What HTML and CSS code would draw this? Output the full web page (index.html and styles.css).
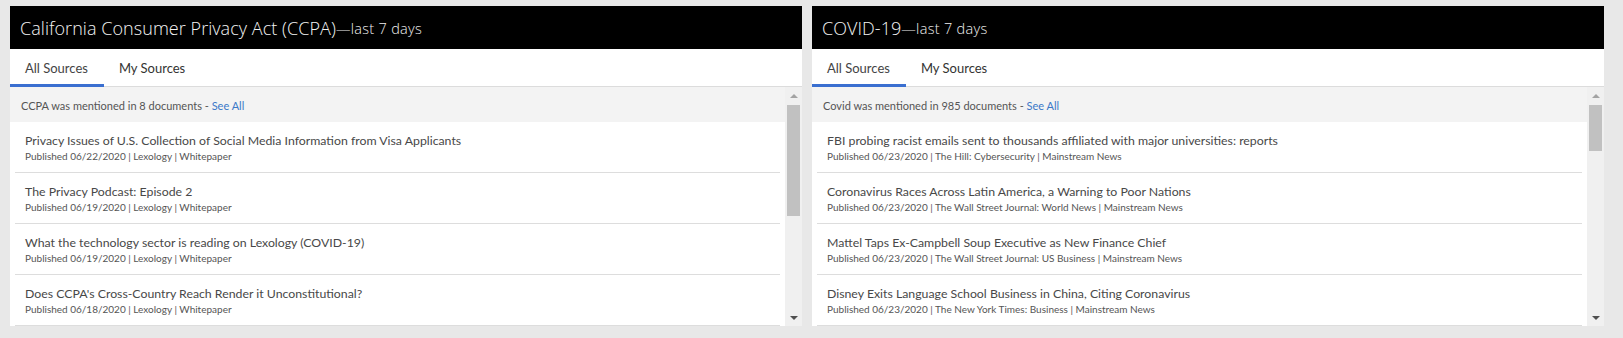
FILE: index.html
```html
<!DOCTYPE html>
<html>
<head>
<meta charset="utf-8">
<link rel="stylesheet" href="styles.css">
</head>
<body>
<div class="board">
  <section class="panel">
    <div class="panel-head"><span class="topic">California Consumer Privacy Act (CCPA)</span><span class="range">—last 7 days</span></div>
    <div class="tabs">
      <div class="tab active">All Sources</div>
      <div class="tab">My Sources</div>
    </div>
    <div class="body">
      <div class="list">
        <div class="info">CCPA was mentioned in 8 documents - <a class="see">See All</a></div>
        <div class="item"><div class="title">Privacy Issues of U.S. Collection of Social Media Information from Visa Applicants</div><div class="meta">Published 06/22/2020 | Lexology | Whitepaper</div></div>
        <div class="item"><div class="title">The Privacy Podcast: Episode 2</div><div class="meta">Published 06/19/2020 | Lexology | Whitepaper</div></div>
        <div class="item"><div class="title">What the technology sector is reading on Lexology (COVID-19)</div><div class="meta">Published 06/19/2020 | Lexology | Whitepaper</div></div>
        <div class="item"><div class="title">Does CCPA's Cross-Country Reach Render it Unconstitutional?</div><div class="meta">Published 06/18/2020 | Lexology | Whitepaper</div></div>
      </div>
      <div class="scrollbar">
        <div class="arrow up"></div>
        <div class="track"><div class="thumb thumb-long"></div></div>
        <div class="arrow down"></div>
      </div>
    </div>
  </section>
  <section class="panel">
    <div class="panel-head"><span class="topic">COVID-19</span><span class="range">—last 7 days</span></div>
    <div class="tabs">
      <div class="tab active">All Sources</div>
      <div class="tab">My Sources</div>
    </div>
    <div class="body">
      <div class="list">
        <div class="info">Covid was mentioned in 985 documents - <a class="see">See All</a></div>
        <div class="item"><div class="title">FBI probing racist emails sent to thousands affiliated with major universities: reports</div><div class="meta">Published 06/23/2020 | The Hill: Cybersecurity | Mainstream News</div></div>
        <div class="item"><div class="title">Coronavirus Races Across Latin America, a Warning to Poor Nations</div><div class="meta">Published 06/23/2020 | The Wall Street Journal: World News | Mainstream News</div></div>
        <div class="item"><div class="title">Mattel Taps Ex-Campbell Soup Executive as New Finance Chief</div><div class="meta">Published 06/23/2020 | The Wall Street Journal: US Business | Mainstream News</div></div>
        <div class="item"><div class="title">Disney Exits Language School Business in China, Citing Coronavirus</div><div class="meta">Published 06/23/2020 | The New York Times: Business | Mainstream News</div></div>
      </div>
      <div class="scrollbar">
        <div class="arrow up"></div>
        <div class="track"><div class="thumb thumb-short"></div></div>
        <div class="arrow down"></div>
      </div>
    </div>
  </section>
</div>
</body>
</html>
```
FILE: styles.css
```css
html, body {
  margin: 0;
  padding: 0;
  background: #e8e8e8;
  height: 100%;
}
body {
  font-family: "Lato", "Open Sans", sans-serif;
  color: #333;
}
.board {
  display: flex;
  gap: 10px;
  padding: 6px 0 0 10px;
}
.panel {
  width: 792px;
  background: #fff;
  display: flex;
  flex-direction: column;
}
.panel-head {
  height: 43px;
  background: #000;
  color: #f4f4f4;
  display: flex;
  align-items: center;
  padding-left: 10px;
  font-family: "Open Sans", sans-serif;
  font-weight: 300;
}
.topic {
  font-size: 18px;
  letter-spacing: 0.05px;
}
.range {
  font-size: 14.5px;
  padding-top: 2px;
  font-weight: 300;
  letter-spacing: 0.3px;
  color: #f0f0f0;
}
.tabs {
  height: 37px;
  display: flex;
  border-bottom: 1px solid #dcdcdc;
}
.tab {
  padding: 0 16px 0 15px;
  font-size: 13px;
  color: #333;
  display: flex;
  align-items: center;
  border-bottom: 3px solid transparent;
  margin-bottom: -1px;
  padding-top: 2px;
}
.tab.active {
  border-bottom-color: #3a6fd0;
  color: #444;
}
.body {
  height: 239px;
  display: flex;
  overflow: hidden;
}
.list {
  flex: 1;
  overflow: hidden;
}
.info {
  height: 35px;
  background: #f3f3f3;
  font-size: 11px;
  color: #555;
  display: flex;
  align-items: center;
  padding-left: 11px;
  padding-top: 1px;
  box-sizing: border-box;
  white-space: pre;
}
.see {
  color: #3b78c8;
}
.item {
  margin: 0 5px;
  padding: 11px 10px 9px 10px;
  border-bottom: 1px solid #dddddd;
}
.title {
  font-size: 12.3px;
  line-height: 16px;
  color: #484848;
  white-space: nowrap;
}
.meta {
  font-size: 10px;
  line-height: 14px;
  color: #555;
  white-space: nowrap;
}
.scrollbar {
  width: 17px;
  background: #f0f0f0;
  display: flex;
  flex-direction: column;
}
.arrow {
  height: 17px;
  display: flex;
  align-items: center;
  justify-content: center;
}
.arrow.up::before {
  content: "";
  border-left: 4px solid transparent;
  border-right: 4px solid transparent;
  border-bottom: 4px solid #a3a3a3;
}
.arrow.down::before {
  content: "";
  border-left: 4px solid transparent;
  border-right: 4px solid transparent;
  border-top: 4px solid #505050;
}
.track {
  flex: 1;
  padding: 1px 2px 0 2px;
}
.thumb {
  background: #c1c1c1;
}
.thumb-long { height: 111px; }
.thumb-short { height: 46px; }
```
